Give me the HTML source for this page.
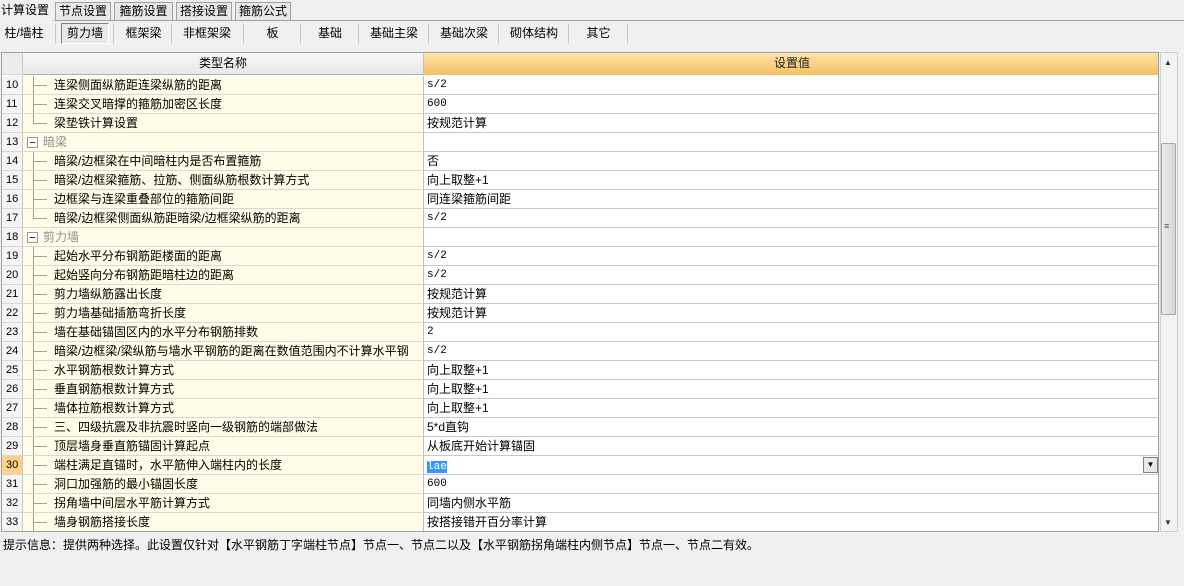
<!DOCTYPE html>
<html><head><meta charset="utf-8"><style>
*{margin:0;padding:0;box-sizing:border-box}
body{width:1184px;height:586px;background:#f0f0f0;font-family:"Liberation Sans","Noto Sans CJK SC",sans-serif;font-size:12px;color:#000;position:relative;overflow:hidden;white-space:nowrap}
.abs{position:absolute}
.tab{position:absolute;top:2px;height:18px;border:1px solid #a0a0a0;border-bottom:none;background:#e8e8e8;font-size:12px;line-height:17px;padding:0 3px;text-align:center}
.tb{position:absolute;top:21px;height:24px;line-height:24px;font-size:12px;text-align:center}
.sep{position:absolute;top:24px;width:1px;height:20px;background:#c8c8c8}
.grid{position:absolute;left:1px;top:52px;width:1158px;height:480px;background:#fff;border:1px solid #a0a0a0;overflow:hidden}
.row{position:absolute;left:0;height:19px;width:1158px}
.n{position:absolute;left:0;width:21px;height:19px;background:#f4f4f4;border-right:1px solid #c8c8c8;border-bottom:1px solid #d8d8d8;line-height:18px;padding-left:4px;font-size:11px}
.nm{position:absolute;left:21px;width:401px;height:19px;background:#fffde8;border-right:1px solid #c0c0c0;border-bottom:1px solid #d8d8d8;line-height:18px;padding-left:31px;font-size:12px;overflow:hidden}
.v{position:absolute;left:422px;width:736px;height:19px;border-bottom:1px solid #c8c8c8;line-height:18px;padding-left:3px;font-size:12px}
.mono{font-family:"Liberation Mono",monospace;font-size:11px}
.vl{position:absolute;left:10px;top:0;width:1px;height:19px;background:#a0a0a0}
.hl{position:absolute;left:11px;top:9px;width:13px;height:1px;background:#a0a0a0}
.g{color:#909090;padding-left:20px}
.box{position:absolute;left:4px;top:4px;width:11px;height:11px;border:1px solid #999;background:#fff}
.box:after{content:"";position:absolute;left:2px;top:4px;width:5px;height:1px;background:#333}
</style></head><body>
<div class="abs" style="left:0;top:0;width:54px;height:21px;background:#f0f0f0;font-size:12px;line-height:20px;padding-left:1px">计算设置</div>
<div class="abs" style="left:0;top:20px;width:1184px;height:1px;background:#a0a0a0"></div>
<div class="abs" style="left:0;top:20px;width:54px;height:1px;background:#f0f0f0"></div>
<div class="tab" style="left:55px;width:56px">节点设置</div>
<div class="tab" style="left:114px;width:59px">箍筋设置</div>
<div class="tab" style="left:176px;width:56px">搭接设置</div>
<div class="tab" style="left:235px;width:56px">箍筋公式</div>

<div class="tb" style="left:0;width:48px">柱/墙柱</div><div class="sep" style="left:55px"></div>
<div class="tb" style="left:61px;width:48px;top:23px;height:21px;line-height:19px;border:1px solid;border-color:#808080 #fff #fff #808080;background:#e8e8e8">剪力墙</div><div class="sep" style="left:113px"></div>
<div class="tb" style="left:116px;width:55px">框架梁</div><div class="sep" style="left:171px"></div>
<div class="tb" style="left:173px;width:68px">非框架梁</div><div class="sep" style="left:243px"></div>
<div class="tb" style="left:245px;width:55px">板</div><div class="sep" style="left:300px"></div>
<div class="tb" style="left:302px;width:56px">基础</div><div class="sep" style="left:358px"></div>
<div class="tb" style="left:360px;width:68px">基础主梁</div><div class="sep" style="left:428px"></div>
<div class="tb" style="left:430px;width:68px">基础次梁</div><div class="sep" style="left:498px"></div>
<div class="tb" style="left:500px;width:68px">砌体结构</div><div class="sep" style="left:568px"></div>
<div class="tb" style="left:570px;width:57px">其它</div><div class="sep" style="left:627px"></div>

<div class="grid">
<div class="row" style="top:0;height:22px">
<div class="n" style="height:22px;background:#ececec"></div>
<div class="abs" style="left:21px;width:401px;height:22px;background:linear-gradient(#f8f8f8,#e8e8e8);border-right:1px solid #c0c0c0;border-bottom:1px solid #b0b0b0;text-align:center;line-height:21px">类型名称</div>
<div class="abs" style="left:422px;width:736px;height:22px;background:linear-gradient(#fde3ad,#f6c060);text-align:center;line-height:21px;color:#222">设置值</div>
</div>
</div>
<div class="abs" style="left:1160px;top:52px;width:18px;height:480px;background:#f2f2f2;border:1px solid #d0d0d0"></div>
<div class="abs" style="left:1164px;top:58px;font-size:8px;color:#333">▲</div>
<div class="abs" style="left:1161px;top:143px;width:15px;height:172px;background:linear-gradient(90deg,#ececec,#d6d6d6);border:1px solid #a8a8a8;border-radius:2px"></div>
<div class="abs" style="left:1164px;top:224px;font-size:9px;color:#555;line-height:4px">≡</div>
<div class="abs" style="left:1164px;top:518px;font-size:8px;color:#333">▼</div>
<div class="abs" style="left:3px;top:536px;font-size:12px">提示信息：提供两种选择。此设置仅针对【水平钢筋丁字端柱节点】节点一、节点二以及【水平钢筋拐角端柱内侧节点】节点一、节点二有效。</div>

<div class="grid" style="background:transparent;border-color:transparent">
<div class="row" style="top:23px"><div class="n">10</div><div class="nm"><i class="vl"></i><i class="hl"></i>连梁侧面纵筋距连梁纵筋的距离</div><div class="v mono">s/2</div></div>
<div class="row" style="top:42px"><div class="n">11</div><div class="nm"><i class="vl"></i><i class="hl"></i>连梁交叉暗撑的箍筋加密区长度</div><div class="v mono">600</div></div>
<div class="row" style="top:61px"><div class="n">12</div><div class="nm"><i class="vl" style="height:10px"></i><i class="hl"></i>梁垫铁计算设置</div><div class="v">按规范计算</div></div>
<div class="row" style="top:80px"><div class="n">13</div><div class="nm g"><i class="box"></i>暗梁</div><div class="v"></div></div>
<div class="row" style="top:99px"><div class="n">14</div><div class="nm"><i class="vl"></i><i class="hl"></i>暗梁/边框梁在中间暗柱内是否布置箍筋</div><div class="v">否</div></div>
<div class="row" style="top:118px"><div class="n">15</div><div class="nm"><i class="vl"></i><i class="hl"></i>暗梁/边框梁箍筋、拉筋、侧面纵筋根数计算方式</div><div class="v">向上取整+1</div></div>
<div class="row" style="top:137px"><div class="n">16</div><div class="nm"><i class="vl"></i><i class="hl"></i>边框梁与连梁重叠部位的箍筋间距</div><div class="v">同连梁箍筋间距</div></div>
<div class="row" style="top:156px"><div class="n">17</div><div class="nm"><i class="vl" style="height:10px"></i><i class="hl"></i>暗梁/边框梁侧面纵筋距暗梁/边框梁纵筋的距离</div><div class="v mono">s/2</div></div>
<div class="row" style="top:175px"><div class="n">18</div><div class="nm g"><i class="box"></i>剪力墙</div><div class="v"></div></div>
<div class="row" style="top:194px"><div class="n">19</div><div class="nm"><i class="vl"></i><i class="hl"></i>起始水平分布钢筋距楼面的距离</div><div class="v mono">s/2</div></div>
<div class="row" style="top:213px"><div class="n">20</div><div class="nm"><i class="vl"></i><i class="hl"></i>起始竖向分布钢筋距暗柱边的距离</div><div class="v mono">s/2</div></div>
<div class="row" style="top:232px"><div class="n">21</div><div class="nm"><i class="vl"></i><i class="hl"></i>剪力墙纵筋露出长度</div><div class="v">按规范计算</div></div>
<div class="row" style="top:251px"><div class="n">22</div><div class="nm"><i class="vl"></i><i class="hl"></i>剪力墙基础插筋弯折长度</div><div class="v">按规范计算</div></div>
<div class="row" style="top:270px"><div class="n">23</div><div class="nm"><i class="vl"></i><i class="hl"></i>墙在基础锚固区内的水平分布钢筋排数</div><div class="v mono">2</div></div>
<div class="row" style="top:289px"><div class="n">24</div><div class="nm"><i class="vl"></i><i class="hl"></i>暗梁/边框梁/梁纵筋与墙水平钢筋的距离在数值范围内不计算水平钢</div><div class="v mono">s/2</div></div>
<div class="row" style="top:308px"><div class="n">25</div><div class="nm"><i class="vl"></i><i class="hl"></i>水平钢筋根数计算方式</div><div class="v">向上取整+1</div></div>
<div class="row" style="top:327px"><div class="n">26</div><div class="nm"><i class="vl"></i><i class="hl"></i>垂直钢筋根数计算方式</div><div class="v">向上取整+1</div></div>
<div class="row" style="top:346px"><div class="n">27</div><div class="nm"><i class="vl"></i><i class="hl"></i>墙体拉筋根数计算方式</div><div class="v">向上取整+1</div></div>
<div class="row" style="top:365px"><div class="n">28</div><div class="nm"><i class="vl"></i><i class="hl"></i>三、四级抗震及非抗震时竖向一级钢筋的端部做法</div><div class="v">5*d直钩</div></div>
<div class="row" style="top:384px"><div class="n">29</div><div class="nm"><i class="vl"></i><i class="hl"></i>顶层墙身垂直筋锚固计算起点</div><div class="v">从板底开始计算锚固</div></div>
<div class="row" style="top:403px"><div class="n" style="background:#fcd28a">30</div><div class="nm"><i class="vl"></i><i class="hl"></i>端柱满足直锚时，水平筋伸入端柱内的长度</div><div class="v"><span class="mono" style="background:#3399ff;color:#fff">lae</span><span class="abs" style="left:719px;top:1px;width:15px;height:16px;border:1px solid #808080;background:#e8e8e8;font-size:8px;text-align:center;line-height:14px">▼</span></div></div>
<div class="row" style="top:422px"><div class="n">31</div><div class="nm"><i class="vl"></i><i class="hl"></i>洞口加强筋的最小锚固长度</div><div class="v mono">600</div></div>
<div class="row" style="top:441px"><div class="n">32</div><div class="nm"><i class="vl"></i><i class="hl"></i>拐角墙中间层水平筋计算方式</div><div class="v">同墙内侧水平筋</div></div>
<div class="row" style="top:460px"><div class="n">33</div><div class="nm"><i class="vl"></i><i class="hl"></i>墙身钢筋搭接长度</div><div class="v">按搭接错开百分率计算</div></div>
</div>
</body></html>
